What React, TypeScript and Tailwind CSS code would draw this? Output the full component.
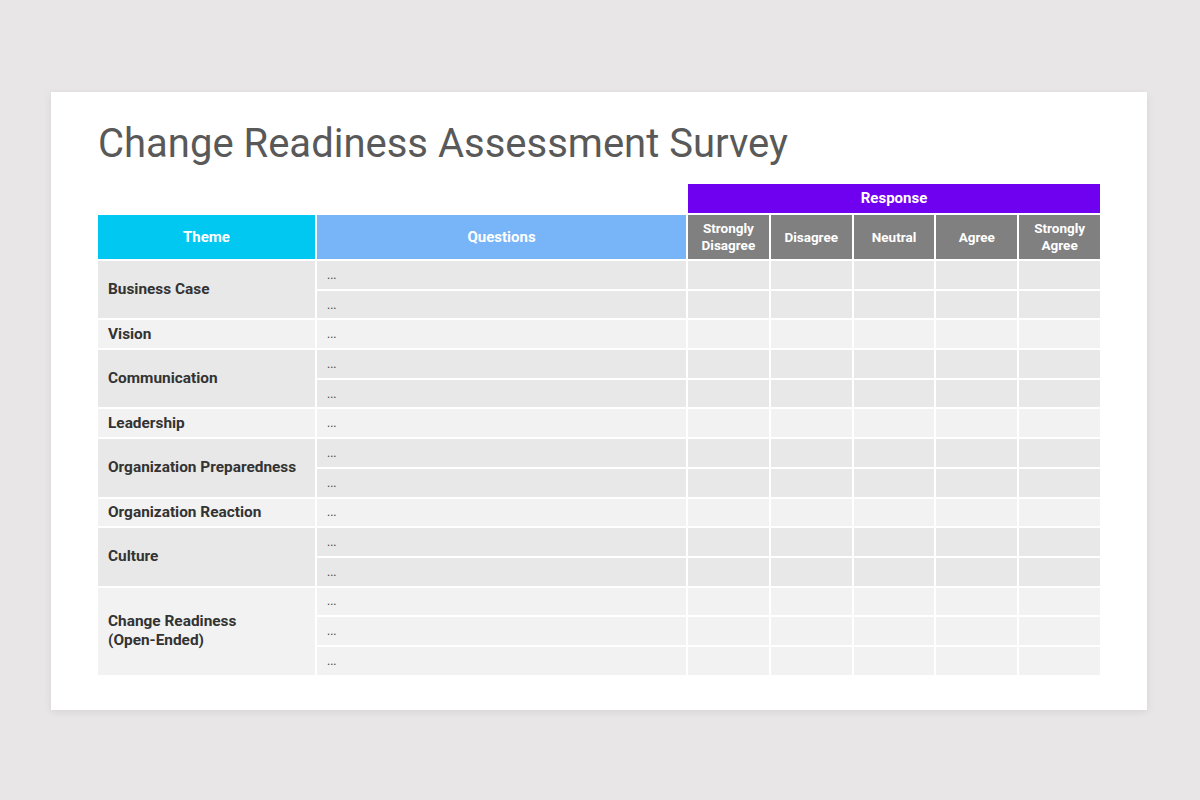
import React from "react"

interface Group {
  theme: string[]
  rows: number
}

const groups: Group[] = [
  { theme: ["Business Case"], rows: 2 },
  { theme: ["Vision"], rows: 1 },
  { theme: ["Communication"], rows: 2 },
  { theme: ["Leadership"], rows: 1 },
  { theme: ["Organization Preparedness"], rows: 2 },
  { theme: ["Organization Reaction"], rows: 1 },
  { theme: ["Culture"], rows: 2 },
  { theme: ["Change Readiness", "(Open-Ended)"], rows: 3 },
]

const responses = [
  ["Strongly", "Disagree"],
  ["Disagree"],
  ["Neutral"],
  ["Agree"],
  ["Strongly", "Agree"],
]

export default function App() {
  return (
    <div className="min-h-screen bg-[#e8e6e7] pt-[92px] pl-[51px] font-['Roboto',sans-serif]">
      <div className="w-[1096px] h-[618px] bg-white px-[47px] pt-[28px] shadow-[0_2px_8px_rgba(0,0,0,0.08)]">
        <h1 className="text-[40px] leading-[48px] text-[#595959]">
          Change Readiness Assessment Survey
        </h1>

        <div className="mt-[16px] flex w-[1002px] flex-col gap-[2px]">
          {/* Response banner */}
          <div className="flex h-[29px] gap-[2px]">
            <div className="w-[588px] shrink-0" />
            <div className="flex flex-1 items-center justify-center bg-[#7000f0] text-[15px] font-bold text-white">
              Response
            </div>
          </div>

          {/* Header row */}
          <div className="flex h-[44px] gap-[2px] text-white font-bold">
            <div className="flex w-[217px] shrink-0 items-center justify-center bg-[#00c8f0] text-[15px]">Theme</div>
            <div className="flex w-[369px] shrink-0 items-center justify-center bg-[#78b4f8] text-[15px]">Questions</div>
            {responses.map((lines, i) => (
              <div
                key={i}
                className="flex flex-1 flex-col items-center justify-center bg-[#808080] text-[13.5px] leading-[17px]"
              >
                {lines.map((l) => (
                  <span key={l}>{l}</span>
                ))}
              </div>
            ))}
          </div>

          {/* Body */}
          {groups.map((g, gi) => {
            const bg = gi % 2 === 0 ? "bg-[#e8e8e8]" : "bg-[#f2f2f2]"
            return (
              <div key={gi} className="flex gap-[2px]">
                <div
                  className={`${bg} flex w-[217px] shrink-0 flex-col justify-center pl-[10px] text-[15.4px] font-bold leading-[19px] text-[#333333]`}
                >
                  {g.theme.map((line) => (
                    <span key={line}>{line}</span>
                  ))}
                </div>
                <div className="flex flex-1 flex-col gap-[2px]">
                  {Array.from({ length: g.rows }).map((_, r) => (
                    <div key={r} className="flex h-[27.7px] gap-[2px]">
                      <div className={`${bg} flex w-[369px] shrink-0 items-center pl-[10px] text-[12px] text-[#444444]`}>
                        ...
                      </div>
                      {responses.map((_, c) => (
                        <div key={c} className={`${bg} flex-1`} />
                      ))}
                    </div>
                  ))}
                </div>
              </div>
            )
          })}
        </div>
      </div>
    </div>
  )
}
